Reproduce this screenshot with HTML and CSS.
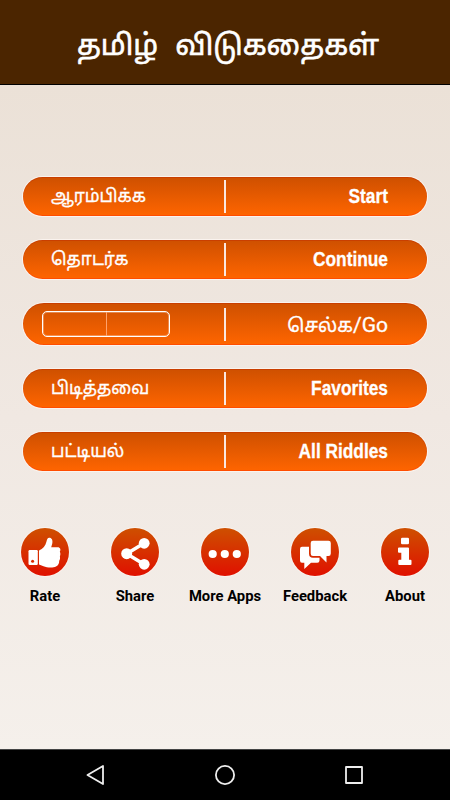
FILE: index.html
```html
<!DOCTYPE html>
<html lang="ta">
<head>
  <meta charset="UTF-8">
  <meta name="viewport" content="width=device-width, initial-scale=1.0">
  <title>தமிழ் விடுகதைகள்</title>
  <link rel="stylesheet" href="styles.css">
</head>
<body>
  <header class="header">
    <h1>தமிழ் விடுகதைகள்</h1>
  </header>

  <main class="content">
    <div class="menu">
      <button class="menu-button">
        <span class="tamil">ஆரம்பிக்க</span>
        <span class="english">Start</span>
      </button>
      <button class="menu-button">
        <span class="tamil">தொடர்க</span>
        <span class="english">Continue</span>
      </button>
      <div class="menu-button go-row">
        <div class="number-box"><span></span><span></span></div>
        <span class="go">செல்க<span class="go-en" lang="en">/Go</span></span>
      </div>
      <button class="menu-button">
        <span class="tamil">பிடித்தவை</span>
        <span class="english">Favorites</span>
      </button>
      <button class="menu-button">
        <span class="tamil">பட்டியல்</span>
        <span class="english">All Riddles</span>
      </button>
    </div>

    <div class="actions">
      <div class="action">
        <svg class="icon" viewBox="0 0 48 48">
          <rect x="7.5" y="22" width="9.3" height="15" rx="1.2"/>
          <path d="M18 22.5C22 21 24.500 17.500 25.500 13.500C26 10.500 27 9.300 28.800 9.700C31.500 10.300 32 13.500 31 16.500L30.200 19.300H36.500C39.500 19.300 40 22 38.800 23.700C39.600 25 39.500 27.200 38.900 28.200C39.300 30 38.900 32 38.200 32.800C38.300 35 37.500 37.500 35 38.500C32 40.200 26 39.800 22.500 38.200L18 36.600Z"/>
          <circle class="hole" cx="11.600" cy="33.300" r="1.500"/>
        </svg>
        <span>Rate</span>
      </div>
      <div class="action">
        <svg class="icon" viewBox="0 0 48 48">
          <path class="line" d="M33 15.300L15.700 25.700L33 36.300"/>
          <circle cx="33.200" cy="15.300" r="5.400"/>
          <circle cx="15.700" cy="25.700" r="5.500"/>
          <circle cx="33.200" cy="36.300" r="5.400"/>
        </svg>
        <span>Share</span>
      </div>
      <div class="action">
        <svg class="icon" viewBox="0 0 48 48">
          <circle cx="11.700" cy="26" r="4.100"/>
          <circle cx="23.800" cy="26" r="4.100"/>
          <circle cx="35.800" cy="26" r="4.100"/>
        </svg>
        <span>More Apps</span>
      </div>
      <div class="action">
        <svg class="icon" viewBox="0 0 48 48">
          <path d="M11 18.800H18V25.500Q18 29.800 22 29.800H28.500V32.500Q28.500 34.700 26.300 34.700H20L13.300 41V34.700H11Q9 34.700 9 32.500V21Q9 18.800 11 18.800Z"/>
          <path d="M22 12.800H37.500Q39.800 12.800 39.800 15V25.500Q39.800 28 37.500 28H35.500V34.500L29 28H22Q19.700 28 19.700 25.500V15Q19.700 12.800 22 12.800Z"/>
        </svg>
        <span>Feedback</span>
      </div>
      <div class="action">
        <svg class="icon" viewBox="0 0 48 48">
          <rect x="20" y="9.700" width="8" height="6.500" rx="1.300"/>
          <path d="M18 19.500H27Q28 19.500 28 20.500V31.800H29.500Q30.500 31.800 30.500 32.800V36Q30.500 37 29.500 37H18.300Q17.300 37 17.300 36V32.800Q17.300 31.800 18.300 31.800H20.300V24.800H18Q17 24.800 17 23.800V20.500Q17 19.500 18 19.500Z"/>
        </svg>
        <span>About</span>
      </div>
    </div>
  </main>

  <nav class="navbar">
    <svg viewBox="0 0 20 20"><path d="M17 1V19L1.500 10Z"/></svg>
    <svg viewBox="0 0 20 20"><circle cx="10" cy="10" r="9.100"/></svg>
    <svg viewBox="0 0 20 20"><rect x="2" y="2" width="16" height="16"/></svg>
  </nav>
</body>
</html>
```

FILE: styles.css
```css
* {
  box-sizing: border-box;
}

body {
  margin: 0;
  height: 100vh;
  display: flex;
  flex-direction: column;
  overflow: hidden;
  font-family: Roboto, "Noto Sans Tamil", "Noto Sans", sans-serif;
}

.header {
  height: 85px;
  background-color: #4b2500;
  border-bottom: 1px solid #000;
  text-align: center;
}

h1 {
  margin: 0;
  padding: 3px 0 0 6px;
  font-size: 29px;
  font-weight: 400;
  line-height: 84px;
  word-spacing: 10px;
  white-space: nowrap;
  color: #fff;
  -webkit-text-stroke: 0.6px #fff;
}

.content {
  flex: 1;
  padding-top: 92px;
  background: linear-gradient(#ebe1d7, #f0e8e2 50%, #f5f0eb);
}

.menu {
  display: flex;
  flex-direction: column;
  gap: 24px;
  padding: 0 23px;
}

.menu-button {
  display: grid;
  grid-template-columns: 1fr 1fr;
  align-items: center;
  height: 39px;
  padding: 0;
  border: none;
  border-radius: 20px;
  background: linear-gradient(90deg, transparent 201px, #fbe8e0 201px, #fbe8e0 203px, transparent 203px) 0 3px / 100% 33px no-repeat, linear-gradient(#ce5000, #ff6500);
  box-shadow: 0 0 0 1px #faf3ee, inset 0 -1px 0 #ff4d00, inset 0 1px 0 #c93f00;
  color: #fff;
}

.tamil {
  padding-top: 1px;
  padding-left: 28px;
  font-family: "Noto Sans Tamil", "Noto Sans", sans-serif;
  font-size: 17.3px;
  line-height: 33px;
  text-align: left;
  -webkit-text-stroke: 0.3px #fff;
}

.english {
  margin-right: 39px;
  font-family: "Liberation Sans", Arial, sans-serif;
  font-size: 20px;
  font-weight: 700;
  text-align: right;
  white-space: nowrap;
  transform: scaleX(0.865);
  transform-origin: right;
  -webkit-text-stroke: 0.3px #fff;
}

.go-row {
  height: 42px;
  border-radius: 21px;
  background-position: 0 5px, 0 0;
}

.number-box {
  display: grid;
  grid-template-columns: 1fr 1fr;
  width: 128px;
  height: 26px;
  margin-left: 19px;
  border: 1px solid #fff;
  border-radius: 5px;
  box-shadow: inset 0 0 0 1px rgba(255, 255, 255, 0.3);
}

.number-box span + span {
  border-left: 1px solid #ffa26b;
}

.go {
  padding-top: 4px;
  padding-right: 39px;
  font-size: 19px;
  text-align: right;
  white-space: nowrap;
  -webkit-text-stroke: 0.3px #fff;
}

.go-en {
  font-family: Roboto, sans-serif;
  font-size: 21px;
}

.actions {
  display: grid;
  grid-template-columns: repeat(5, 1fr);
  padding-top: 57px;
}

.action {
  display: flex;
  flex-direction: column;
  align-items: center;
  gap: 11px;
  font-size: 14.8px;
  font-weight: 700;
  line-height: 18px;
  white-space: nowrap;
  color: #000;
}

.icon {
  width: 48px;
  height: 48px;
  border-radius: 50%;
  background: linear-gradient(#ce5000, #e01000);
  box-shadow: 0 0 0 1px #faf3ee;
  fill: #fff;
}

.icon .hole {
  fill: #dc2a00;
}

.icon .line {
  fill: none;
  stroke: #fff;
  stroke-width: 3.5;
}

.navbar {
  display: flex;
  justify-content: space-between;
  align-items: center;
  height: 51px;
  padding: 0 86px;
  border-top: 1px solid #444;
  background-color: #000;
}

.navbar svg {
  width: 20px;
  height: 20px;
  fill: none;
  stroke: #eee;
  stroke-width: 1.8;
  stroke-linejoin: round;
}
```
